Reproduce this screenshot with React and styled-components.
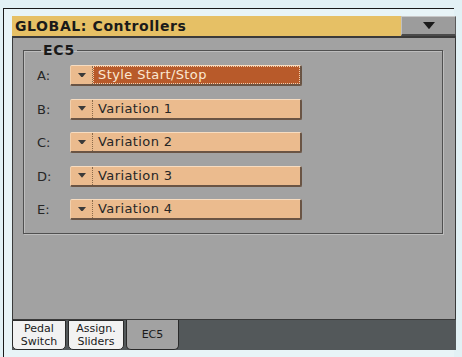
import React from "react";
import styled, { createGlobalStyle } from "styled-components";

const GlobalStyle = createGlobalStyle`
	html, body {
		margin: 0;
		background: #e2f1f5;
	}
	body {
		font-family: "DejaVu Sans", "Liberation Sans", sans-serif;
	}
`;

const Frame = styled.div`
	margin: 8px 0 0 3px;
	padding: 7px 0 7px 8px;
	border-top: 1px solid #1a1a1a;
	border-left: 1px solid #1a1a1a;
	background: #e8f4f7;
	width: 451px;
	box-sizing: border-box;
`;

const Screen = styled.div`
	width: 444px;
	display: flex;
	flex-flow: column nowrap;
`;

const TitleBar = styled.div`
	height: 20px;
	display: flex;
	align-items: stretch;
	background: #e6c065;
`;

const Title = styled.div`
	flex: 1;
	padding-left: 3px;
	font-size: 14px;
	font-weight: bold;
	letter-spacing: 0.6px;
	line-height: 20px;
	color: #1a1a1a;
`;

const MenuButton = styled.div`
	width: 55px;
	background: #9c9c9c;
	border-top: 1px solid #c8c8c8;
	border-left: 1px solid #c0c0c0;
	border-bottom: 2px solid #4a4a4a;
	border-right: 1px solid #5a5a5a;
	box-sizing: border-box;
	display: flex;
	align-items: center;
	justify-content: center;
`;

const Body = styled.div`
	height: 284px;
	background: #a2a2a2;
	border: 1px solid #3a3a3a;
	border-top-width: 2px;
	box-sizing: border-box;
	padding: 6px 12px 0 10px;
`;

const Group = styled.fieldset`
	margin: 0;
	padding: 9px 0 0 13px;
	height: 190px;
	box-sizing: border-box;
	border: 1px solid #505050;
	box-shadow: inset 1px 1px 0 #bdbdbd, 1px 1px 0 #bdbdbd;
	display: flex;
	flex-flow: column nowrap;
	gap: 12.5px;
`;

const Legend = styled.legend`
	padding: 0 2px;
	margin-left: 4px;
	font-size: 14px;
	font-weight: bold;
	letter-spacing: 0.8px;
	color: #1a1a1a;
	line-height: 12px;
`;

const Row = styled.div`
	display: flex;
	align-items: center;
	height: 21px;
`;

const RowLabel = styled.div`
	width: 33px;
	font-size: 13px;
	color: #262626;
`;

const Select = styled.div`
	width: 232px;
	height: 21px;
	display: flex;
	background: #ebbb8e;
	border-top: 1px solid #f7dcc0;
	border-left: 1px solid #f2d0ad;
	border-right: 2px solid #6a5444;
	border-bottom: 2px solid #6a5444;
	border-radius: 2px;
	box-sizing: border-box;
`;

const SelectArrow = styled.div`
	width: 21px;
	display: flex;
	align-items: center;
	justify-content: center;
	border-right: 1px dotted #8a6a4a;
`;

const SelectValue = styled.div`
	flex: 1;
	padding-left: 5px;
	font-size: 13px;
	line-height: 18px;
	letter-spacing: 0.4px;
	color: ${(p) => (p.$active ? "#fbe8d2" : "#262626")};
	background: ${(p) => (p.$active ? "#b85a2a" : "transparent")};
	outline: ${(p) => (p.$active ? "1px dotted #f0d0b0" : "none")};
	outline-offset: -1px;
`;

const Tabs = styled.div`
	height: 30px;
	display: flex;
	align-items: stretch;
	gap: 2px;
	background: #53585a;
`;

const Tab = styled.div`
	width: ${(p) => p.$w}px;
	background: ${(p) => (p.$active ? "#a2a2a2" : "#f2f2f2")};
	border: 1px solid #2a2a2a;
	border-top: ${(p) => (p.$active ? "none" : "1px solid #2a2a2a")};
	border-radius: 0 0 5px 5px;
	box-sizing: border-box;
	display: flex;
	flex-flow: column nowrap;
	align-items: center;
	justify-content: center;
	text-align: center;
	font-size: 11px;
	line-height: 13px;
	color: #1a1a1a;
`;

const Triangle = ({ size = 10, color = "#3a3a3a" }) => (
	<svg width={size} height={size * 0.6} viewBox="0 0 10 6">
		<path d="M0 0 L10 0 L5 6 Z" fill={color} />
	</svg>
);

const rows = [
	{ key: "A", value: "Style Start/Stop", active: true },
	{ key: "B", value: "Variation 1" },
	{ key: "C", value: "Variation 2" },
	{ key: "D", value: "Variation 3" },
	{ key: "E", value: "Variation 4" },
];

const App = () => (
	<>
		<GlobalStyle />
		<Frame>
			<Screen>
				<TitleBar>
					<Title>GLOBAL: Controllers</Title>
					<MenuButton>
						<Triangle size={12} color="#1a1a1a" />
					</MenuButton>
				</TitleBar>
				<Body>
					<Group>
						<Legend>EC5</Legend>
						{rows.map((r) => (
							<Row key={r.key}>
								<RowLabel>{r.key}:</RowLabel>
								<Select>
									<SelectArrow>
										<Triangle size={8} />
									</SelectArrow>
									<SelectValue $active={r.active}>{r.value}</SelectValue>
								</Select>
							</Row>
						))}
					</Group>
				</Body>
				<Tabs>
					<Tab $w={54}>
						<span>Pedal</span>
						<span>Switch</span>
					</Tab>
					<Tab $w={56}>
						<span>Assign.</span>
						<span>Sliders</span>
					</Tab>
					<Tab $w={53} $active>
						EC5
					</Tab>
				</Tabs>
			</Screen>
		</Frame>
	</>
);

export default App;
